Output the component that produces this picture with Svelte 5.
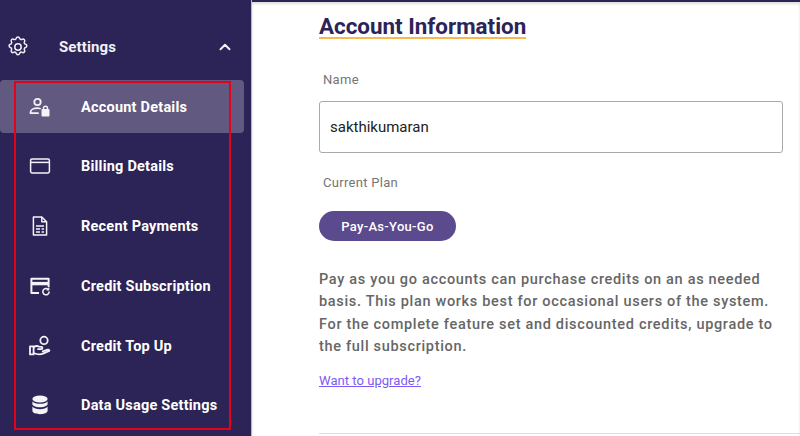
<script>
  const items = ['Account Details', 'Billing Details', 'Recent Payments', 'Credit Subscription', 'Credit Top Up', 'Data Usage Settings'];
</script>

<div class="page">
  <aside class="sidebar">
    <div class="group">
      <svg class="gear" width="24" height="24" viewBox="0 0 24 24" fill="none" stroke="currentColor" stroke-width="1.5" stroke-linecap="round" stroke-linejoin="round">
        <path d="M10.3 3.2c.4-1.6 2.9-1.6 3.3 0a1.7 1.7 0 0 0 2.6 1.1c1.4-.9 3.2.9 2.3 2.3a1.7 1.7 0 0 0 1.1 2.6c1.6.4 1.6 2.9 0 3.3a1.7 1.7 0 0 0-1.1 2.6c.9 1.4-.9 3.2-2.3 2.3a1.7 1.7 0 0 0-2.6 1.1c-.4 1.6-2.9 1.6-3.3 0a1.7 1.7 0 0 0-2.6-1.1c-1.4.9-3.2-.9-2.3-2.3a1.7 1.7 0 0 0-1.1-2.6c-1.6-.4-1.6-2.9 0-3.3a1.7 1.7 0 0 0 1.1-2.6c-.9-1.4.9-3.2 2.3-2.3a1.7 1.7 0 0 0 2.6-1.1z" />
        <circle cx="12" cy="12" r="3.2" />
      </svg>
      <span class="group-label">Settings</span>
      <svg class="chevron" width="14" height="14" viewBox="0 0 14 14" fill="none" stroke="currentColor" stroke-width="2" stroke-linecap="round" stroke-linejoin="round">
        <path d="M2.5 9.2 7 4.8l4.5 4.4" />
      </svg>
    </div>

    <nav class="menu">
      {#each items as item, i}
        <div class="item" class:active={i === 0}>
          <span class="icon">
            {#if i === 0}
              <svg width="22" height="22" viewBox="0 0 22 22" fill="none" stroke="currentColor" stroke-width="1.8" stroke-linecap="round">
                <circle cx="8.5" cy="6" r="3.2" />
                <path d="M1.5 17.2v-.8c0-2.6 3.4-4.2 7-4.2 1 0 1.7.1 2.5.3M1.5 17.2h7.5" />
                <rect x="12.5" y="13" width="8" height="7.5" rx="1" fill="currentColor" stroke="none" />
                <path d="M14.5 13.5v-1.2a2 2 0 0 1 4 0v1.2" stroke-width="1.4" />
              </svg>
            {:else if i === 1}
              <svg width="22" height="22" viewBox="0 0 22 22" fill="none" stroke="currentColor" stroke-width="1.5">
                <rect x="1.6" y="4" width="18.8" height="14" rx="1.4" />
                <path d="M1.6 7.4h18.8" />
              </svg>
            {:else if i === 2}
              <svg width="22" height="22" viewBox="0 0 22 22" fill="none" stroke="currentColor" stroke-width="1.5" stroke-linejoin="round">
                <path d="M4.4 2h8.4l4.8 4.8V20H4.4z" />
                <path d="M12.8 2v4.8h4.8" />
                <path d="M7 11h8M7 14h4M7 17h4M12.6 14H15M12.6 17H15" />
              </svg>
            {:else if i === 3}
              <svg width="22" height="22" viewBox="0 0 22 22" fill="none" stroke="currentColor" stroke-width="2" stroke-linejoin="round">
                <path d="M10 18H2.4V3.8h17.2V12" />
                <path d="M2.4 8.6h17.2" stroke-width="3.4" />
                <path d="M20.2 16.6a3.2 3.2 0 1 1-1-2.3" stroke-width="1.5" />
                <path d="M19.8 12.6v2.2h-2.2" stroke-width="1.2" />
              </svg>
            {:else if i === 4}
              <svg width="22" height="22" viewBox="0 0 22 22" fill="none" stroke="currentColor" stroke-width="1.8" stroke-linejoin="round" stroke-linecap="round">
                <circle cx="15" cy="5.4" r="3.7" />
                <path d="M1 11.4h3.6v8H1z" />
                <path d="M4.6 12.2c2-1.4 3.6-1.6 5.2-.6l2.6.2c1.4.1 1.4 2.2 0 2.3H9" />
                <path d="M4.6 18c3 1.4 7.6 1.4 10 .4l5.6-2.4c.6-1-.4-1.6-1.4-1.3l-5 1.7" />
              </svg>
            {:else}
              <svg width="22" height="22" viewBox="0 0 22 22" fill="currentColor">
                <ellipse cx="11" cy="5" rx="7.6" ry="3.4" />
                <path d="M3.4 7.2C4.6 9 7.8 9.8 11 9.8s6.4-.8 7.6-2.6V10c0 1.8-3.4 3.2-7.6 3.2S3.4 11.8 3.4 10z" />
                <path d="M3.4 12.6c1.2 1.8 4.4 2.6 7.6 2.6s6.4-.8 7.6-2.6v4.2c0 1.9-3.4 3.4-7.6 3.4s-7.6-1.5-7.6-3.4z" />
              </svg>
            {/if}
          </span>
          <span class="label">{item}</span>
        </div>
      {/each}
    </nav>
    <div class="highlight"></div>
  </aside>

  <main class="content">
    <h1><span>Account Information</span></h1>

    <div class="field-label first">Name</div>
    <div class="input">sakthikumaran</div>

    <div class="field-label plan">Current Plan</div>
    <div class="pill">Pay-As-You-Go</div>

    <p>Pay as you go accounts can purchase credits on an as needed basis. This plan works best for occasional users of the system. For the complete feature set and discounted credits, upgrade to the full subscription.</p>

    <a href="#upgrade">Want to upgrade?</a>

    <hr />
  </main>
</div>

<style>
  :global(body) {
    margin: 0;
    background: #fff;
  }

  .page {
    display: flex;
    height: 436px;
    overflow: hidden;
    font-family: Roboto, "Liberation Sans", sans-serif;
  }

  .sidebar {
    position: relative;
    flex: 0 0 251px;
    background: #2c2356;
    color: #fff;
    border-right: 1px solid #b9b6c8;
    box-sizing: content-box;
  }

  .group {
    display: flex;
    align-items: center;
    height: 24px;
    margin-top: 35px;
    padding-left: 6px;
    font-size: 15px;
    color: #f1f0f5;
  }

  .group-label {
    margin-left: 29px;
    flex: 1;
    font-weight: 700;
    letter-spacing: 0.1px;
  }

  .chevron {
    margin-right: 19px;
  }

  .menu {
    margin-top: 21px;
    width: 244px;
  }

  .item {
    display: flex;
    align-items: center;
    height: 53px;
    margin-bottom: 6.75px;
    padding-left: 29px;
    border-radius: 4px;
    font-size: 14.5px;
    font-weight: 700;
    letter-spacing: 0.22px;
  }

  .item.active {
    background: #615980;
  }

  .icon {
    display: flex;
    width: 22px;
    height: 22px;
    margin-right: 30px;
    color: #f4f3f7;
  }

  .label {
    padding-top: 1px;
  }

  .highlight {
    position: absolute;
    left: 14px;
    top: 81px;
    width: 213px;
    height: 345px;
    border: 2px solid #e6001a;
    pointer-events: none;
  }

  .content {
    flex: 1;
    box-sizing: border-box;
    padding: 0 17px 0 67px;
    border-top: 2px solid #2c2356;
    box-shadow: inset 0 2px 3px #ddd;
  }

  h1 {
    margin: 12px 0 0;
    font-size: 22.4px;
    line-height: 24px;
    font-weight: 700;
    color: #2c2356;
  }

  h1 span {
    display: inline-block;
    height: 23px;
    border-bottom: 2px solid #f9b74e;
  }

  .field-label {
    padding-left: 4px;
    font-size: 13px;
    line-height: 16px;
    letter-spacing: 0.3px;
    color: #757575;
  }

  .first {
    margin-top: 33px;
  }

  .plan {
    margin-top: 22px;
  }

  .input {
    display: flex;
    align-items: center;
    box-sizing: border-box;
    height: 52px;
    margin-top: 13px;
    padding-left: 10px;
    border: 1px solid #aaa;
    border-radius: 3px;
    font-size: 15px;
    color: #212121;
  }

  .pill {
    display: flex;
    align-items: center;
    justify-content: center;
    width: 137px;
    height: 30px;
    margin-top: 20px;
    border-radius: 15px;
    background: #5b4a8e;
    color: #fff;
    font-size: 13px;
    font-weight: 500;
    letter-spacing: 0.3px;
  }

  p {
    margin: 28px 0 0;
    font-size: 14.5px;
    line-height: 22.4px;
    font-weight: 500;
    letter-spacing: 0.68px;
    color: #666;
  }

  a {
    display: block;
    margin-top: 14px;
    font-size: 13.1px;
    line-height: 16px;
    color: #7a5cf5;
  }

  hr {
    margin: 44px -17px 0 0;
    border: 0;
    border-top: 1px solid #ddd;
  }
</style>
